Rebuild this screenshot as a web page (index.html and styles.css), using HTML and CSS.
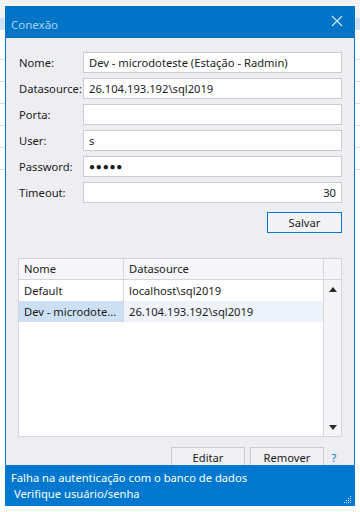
FILE: index.html
```html
<!DOCTYPE html>
<html>
	<head>
		<meta charset="UTF-8">
		<title>Conexão</title>
		<link rel="stylesheet" href="styles.css">
	</head>
	<body>
		<div class="desk">
			<div class="desk-top"></div>
			<div class="desk-row sel"></div>
			<div class="desk-row tall"></div>
			<div class="desk-row"></div>
			<div class="desk-row"></div>
			<div class="desk-row"></div>
			<div class="desk-row"></div>
			<div class="desk-row"></div>
		</div>

		<div class="win">
			<div class="titlebar">
				<span class="title">Conexão</span>
				<svg class="close" width="12" height="12" viewBox="0 0 12 12">
					<path d="M1 1 L11 11 M11 1 L1 11" stroke="currentColor" stroke-width="1.3" fill="none"/>
				</svg>
			</div>

			<div class="content">
				<div class="form">
					<label>Nome:</label>
					<div class="field">Dev - microdoteste (Estação - Radmin)</div>
					<label>Datasource:</label>
					<div class="field">26.104.193.192\sql2019</div>
					<label>Porta:</label>
					<div class="field"></div>
					<label>User:</label>
					<div class="field">s</div>
					<label>Password:</label>
					<div class="field pass">●●●●●</div>
					<label>Timeout:</label>
					<div class="field num">30</div>
				</div>

				<div class="save-row">
					<div class="btn default">Salvar</div>
				</div>

				<div class="grid">
					<div class="grid-main">
						<div class="grow head">
							<div class="cell c1">Nome</div>
							<div class="cell c2">Datasource</div>
						</div>
						<div class="grow">
							<div class="cell c1">Default</div>
							<div class="cell c2">localhost\sql2019</div>
						</div>
						<div class="grow picked">
							<div class="cell c1 current">Dev - microdote...</div>
							<div class="cell c2">26.104.193.192\sql2019</div>
						</div>
					</div>
					<div class="scroll">
						<div class="scroll-head"></div>
						<div class="scroll-track">
							<svg width="8" height="5" viewBox="0 0 8 5"><path d="M0 5 L4 0 L8 5 Z" fill="#2a2a2a"/></svg>
							<svg width="8" height="5" viewBox="0 0 8 5"><path d="M0 0 L4 5 L8 0 Z" fill="#2a2a2a"/></svg>
						</div>
					</div>
				</div>

				<div class="actions">
					<div class="btn">Editar</div>
					<div class="btn">Remover</div>
					<span class="help">?</span>
				</div>
			</div>

			<div class="status">
				<div>Falha na autenticação com o banco de dados</div>
				<div>&nbsp;Verifique usuário/senha</div>
				<svg class="grip" width="8" height="8" viewBox="0 0 8 8">
					<g fill="#cfe3f5">
						<rect x="6" y="0" width="1" height="1"/>
						<rect x="4" y="2" width="1" height="1"/>
						<rect x="6" y="2" width="1" height="1"/>
						<rect x="2" y="4" width="1" height="1"/>
						<rect x="4" y="4" width="1" height="1"/>
						<rect x="6" y="4" width="1" height="1"/>
						<rect x="0" y="6" width="1" height="1"/>
						<rect x="2" y="6" width="1" height="1"/>
						<rect x="4" y="6" width="1" height="1"/>
						<rect x="6" y="6" width="1" height="1"/>
					</g>
				</svg>
			</div>
		</div>
	</body>
</html>
```

FILE: styles.css
```css
body{
	margin: 0;
	width: 360px;
	height: 512px;
	position: relative;
	overflow: hidden;
	background: #ffffff;
	font-family: "Noto Sans", "Open Sans", sans-serif;
	font-size: 11.2px;
	color: #1b1b1b;
}

/* the app behind the dialog */
.desk-top{
	height: 18px;
	background: #f3f3f3;
}
.desk-row{
	height: 21px;
	border-bottom: 1px solid #dcdcdc;
}
.desk-row.sel{
	height: 12px;
	background: #cce4f7;
	border-bottom: none;
}
.desk-row.tall{
	height: 29px;
}

/* dialog */
.win{
	position: absolute;
	left: 5px;
	top: 6px;
	width: 350px;
	height: 500px;
	box-sizing: border-box;
	border: 1px solid #0174c8;
	border-top: none;
	border-bottom: none;
	background: #eeeef2;
	display: flex;
	flex-direction: column;
}
.titlebar{
	height: 32px;
	margin: 0 -1px;
	padding: 0 12px 0 6px;
	background: #0174c8;
	display: flex;
	align-items: center;
	justify-content: space-between;
	color: rgba(255,255,255,0.68);
}
.title{
	font-size: 11.5px;
	margin-top: 5px;
}
.close{
	margin-top: -2px;
	color: rgba(255,255,255,0.8);
}

.content{
	flex: 1;
	overflow: hidden;
	padding: 14px 12px 0 12px;
}

.form{
	display: grid;
	grid-template-columns: 65px 1fr;
	row-gap: 5px;
}
.form label{
	padding-left: 1px;
	line-height: 21px;
	white-space: nowrap;
}
.field{
	height: 21px;
	box-sizing: border-box;
	border: 1px solid #cbcbd0;
	background: #ffffff;
	padding: 0 5px;
	line-height: 19px;
	white-space: nowrap;
	overflow: hidden;
}
.field.num{
	text-align: right;
}
.field.pass{
	font-size: 10px;
	letter-spacing: 0.8px;
	line-height: 19px;
}

.save-row{
	display: flex;
	justify-content: flex-end;
	margin-top: 9px;
}
.btn{
	width: 74px;
	height: 21px;
	box-sizing: border-box;
	border: 1px solid #cccccc;
	background: #f1f1f3;
	text-align: center;
	line-height: 19px;
}
.btn.default{
	width: 75px;
	border-color: #0078d7;
	background: #f3f3f5;
}

.grid{
	margin-top: 25px;
	height: 179px;
	box-sizing: border-box;
	border: 1px solid #d5d5de;
	background: #ffffff;
	display: flex;
}
.grid-main{
	flex: 1;
	min-width: 0;
}
.grow{
	display: flex;
	height: 21px;
}
.grow.head{
	background: #f6f6f8;
	border-bottom: 1px solid #d5d5de;
	height: 20px;
}
.cell{
	padding: 0 5px;
	line-height: 21px;
	white-space: nowrap;
	overflow: hidden;
	box-sizing: border-box;
}
.head .cell{
	line-height: 20px;
}
.c1{
	width: 105px;
	border-right: 1px solid #d5d5de;
}
.c2{
	flex: 1;
}
.grow.picked{
	background: #eef3fb;
}
.cell.current{
	background: #cddff3;
}

.scroll{
	width: 17px;
	border-left: 1px solid #d5d5de;
	background: #f5f5f7;
	display: flex;
	flex-direction: column;
}
.scroll-head{
	height: 20px;
	border-bottom: 1px solid #d5d5de;
}
.scroll-track{
	flex: 1;
	display: flex;
	flex-direction: column;
	justify-content: space-between;
	align-items: center;
	padding: 7px 0 6px 0;
}

.actions{
	margin-top: 10px;
	display: flex;
	justify-content: flex-end;
	align-items: flex-start;
	gap: 5px;
}
.help{
	width: 10px;
	margin-right: 3px;
	line-height: 21px;
	color: #0078d7;
	text-align: center;
}

.status{
	height: 41px;
	margin: 0 -1px;
	padding: 5px 0 0 6px;
	box-sizing: border-box;
	background: #0078d0;
	color: #ffffff;
	line-height: 16px;
	position: relative;
}
.grip{
	position: absolute;
	right: 3px;
	bottom: 2px;
}
```
